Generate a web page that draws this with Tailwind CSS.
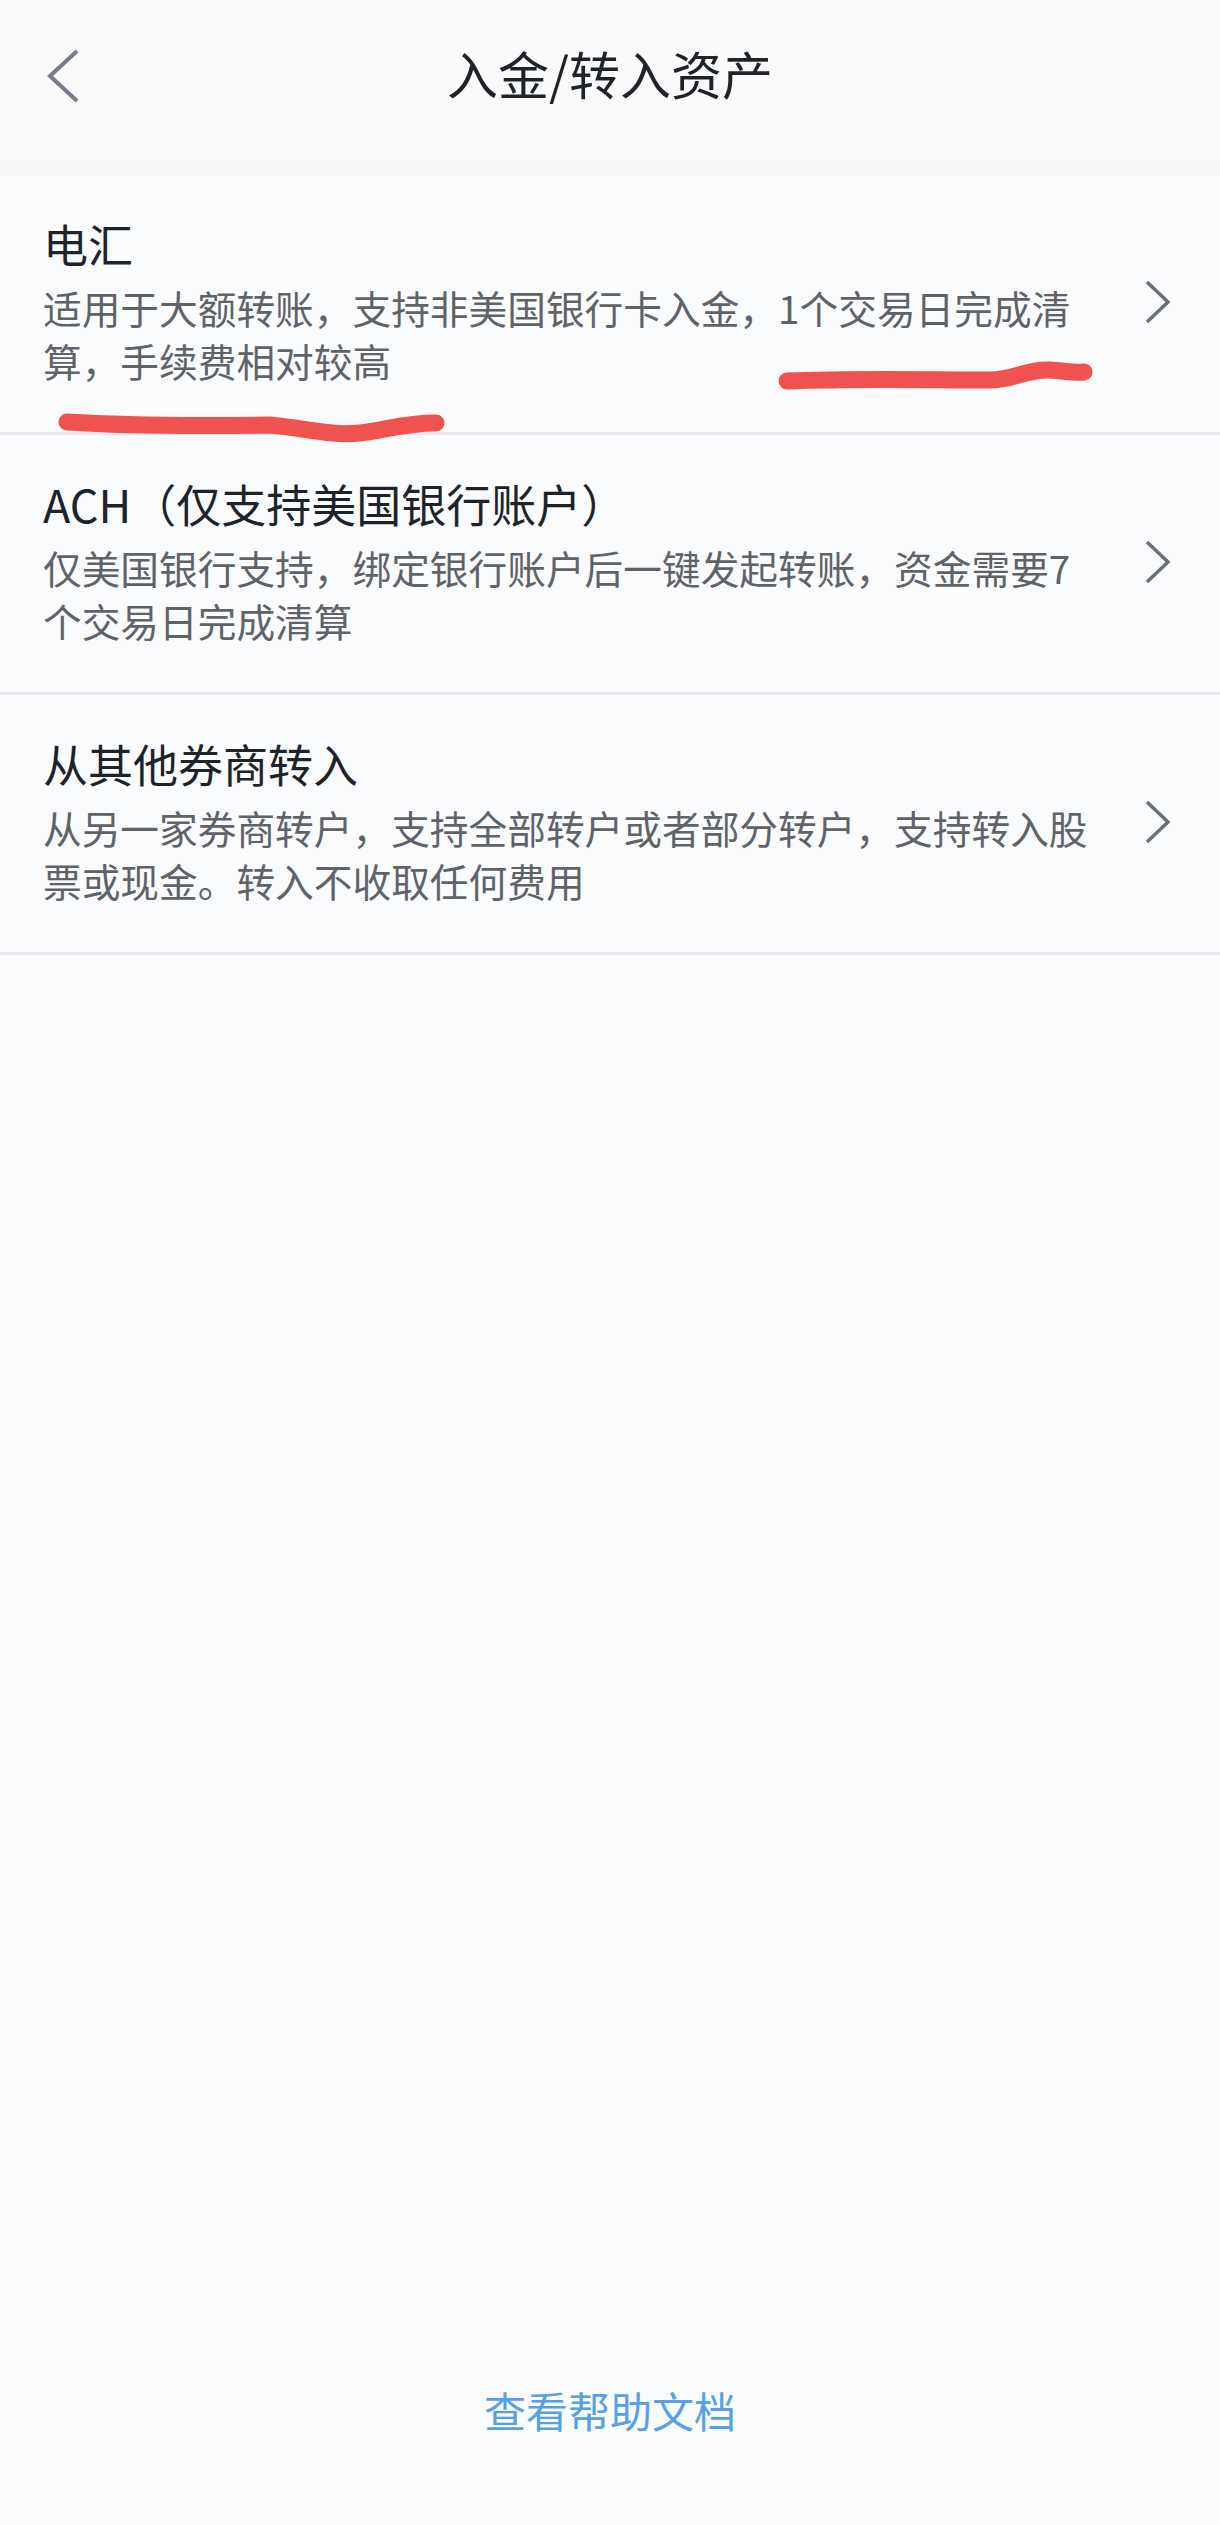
<!DOCTYPE html>
<html lang="zh-CN">
<head>
<meta charset="utf-8">
<script src="https://cdn.jsdelivr.net/npm/@tailwindcss/browser@4"></script>
</head>
<body class="bg-[#fafbfd]">
<div class="relative flex h-[2525px] w-[1220px] flex-col overflow-hidden bg-[#fafbfd] font-['Noto_Sans_CJK_SC','Noto_Sans',sans-serif]">
  <header class="relative flex h-[175px] shrink-0 items-start justify-center bg-[#fafafa] pt-[38px]">
    <svg class="absolute left-[46px] top-[48px]" width="34" height="56" viewBox="0 0 34 56" fill="none"><path d="M31 3 L4 28 L31 53" stroke="#767c8a" stroke-width="4"/></svg>
    <h1 class="text-[51px] leading-[70px] text-[#1d2329] font-normal">入金/转入资产</h1>
    <div class="absolute bottom-0 left-0 h-[15px] w-full bg-[#f8f8f8]"></div>
  </header>
  <main>
    <div class="relative flex h-[260px] items-start border-b-[3px] border-[#e8e9ec] pl-[43px] pt-[38px]">
      <div class="w-[1060px]">
        <div class="text-[45px] leading-[62px] text-[#1d2329]">电汇</div>
        <p class="mt-[6px] text-[38.7px] leading-[53px] text-[#5f6368]">适用于大额转账，支持非美国银行卡入金，1个交易日完成清算，手续费相对较高</p>
      </div>
      <svg class="absolute left-[1142px] top-[103px]" width="30" height="48" viewBox="0 0 30 48" fill="none"><path d="M5 4 L26 24 L5 44" stroke="#6c6f74" stroke-width="3.5"/></svg>
    </div>
    <div class="relative flex h-[260px] items-start border-b-[3px] border-[#e8e9ec] pl-[43px] pt-[38px]">
      <div class="w-[1060px]">
        <div class="text-[45px] leading-[62px] text-[#1d2329]">ACH（仅支持美国银行账户）</div>
        <p class="mt-[6px] text-[38.7px] leading-[53px] text-[#5f6368]">仅美国银行支持，绑定银行账户后一键发起转账，资金需要7个交易日完成清算</p>
      </div>
      <svg class="absolute left-[1142px] top-[103px]" width="30" height="48" viewBox="0 0 30 48" fill="none"><path d="M5 4 L26 24 L5 44" stroke="#6c6f74" stroke-width="3.5"/></svg>
    </div>
    <div class="relative flex h-[260px] items-start border-b-[3px] border-[#e8e9ec] pl-[43px] pt-[38px]">
      <div class="w-[1060px]">
        <div class="text-[45px] leading-[62px] text-[#1d2329]">从其他券商转入</div>
        <p class="mt-[6px] text-[38.7px] leading-[53px] text-[#5f6368]">从另一家券商转户，支持全部转户或者部分转户，支持转入股票或现金。转入不收取任何费用</p>
      </div>
      <svg class="absolute left-[1142px] top-[103px]" width="30" height="48" viewBox="0 0 30 48" fill="none"><path d="M5 4 L26 24 L5 44" stroke="#6c6f74" stroke-width="3.5"/></svg>
    </div>
  </main>
  <footer class="absolute bottom-[85px] left-0 w-full text-center text-[42px] leading-[60px] text-[#56a0e6]">查看帮助文档</footer>
  <svg class="absolute left-0 top-0" width="1220" height="450" viewBox="0 0 1220 450" fill="none">
    <path d="M787 381 C 860 378, 930 380, 990 380 C 1015 380, 1025 369, 1050 370 C 1065 371, 1075 373, 1084 372" stroke="#f0524f" stroke-width="17" stroke-linecap="round"/>
    <path d="M67 422 C 130 426, 200 426, 270 425 C 305 428, 330 436, 360 433 C 385 430, 405 423, 436 423" stroke="#f0524f" stroke-width="17" stroke-linecap="round"/>
  </svg>
</div>
</body>
</html>
